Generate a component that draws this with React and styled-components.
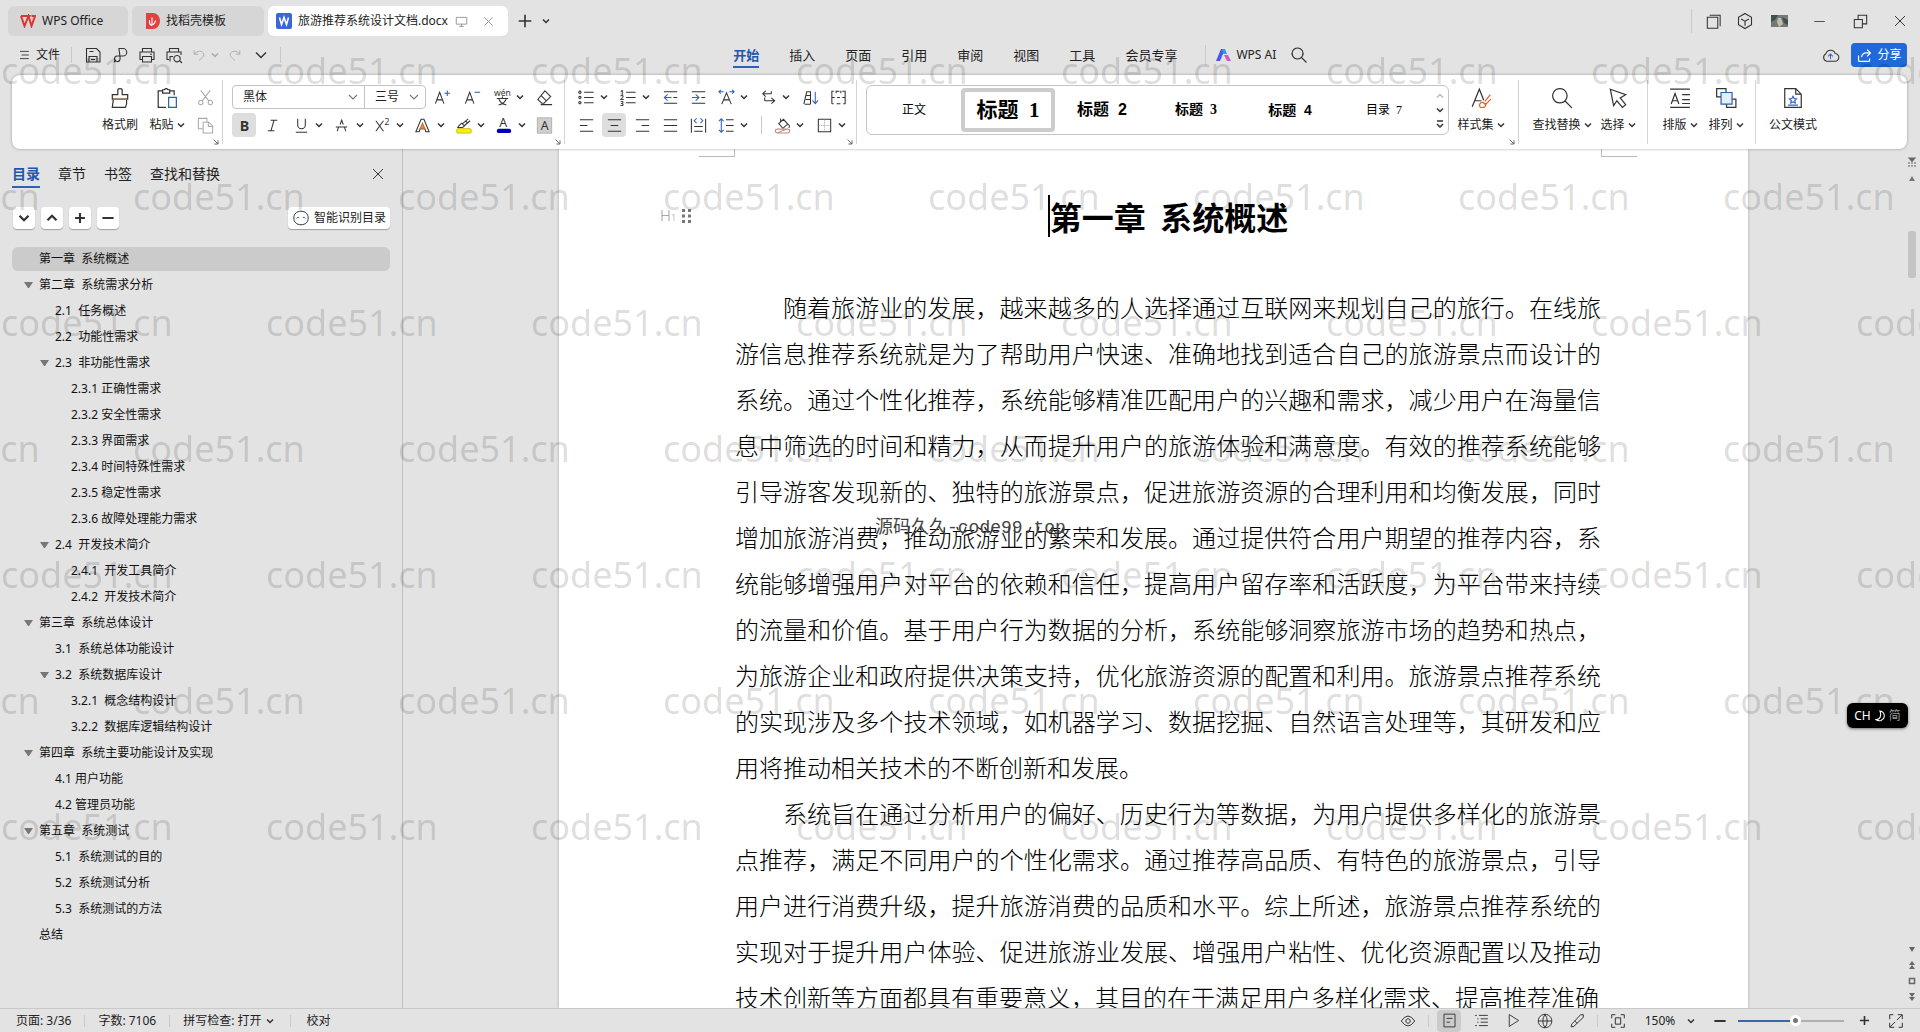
import React, { useState } from 'react';
import styled, { createGlobalStyle, css } from 'styled-components';

const GlobalStyle = createGlobalStyle`
  * {
    box-sizing: border-box;
  }

  body {
    margin: 0;
    overflow: hidden;
    background: #e3e3e3;
    color: #222222;
    font-family: "Noto Sans", "Noto Sans CJK SC", sans-serif;
    font-size: 12px;
    line-height: 16px;
  }

  button,
  select {
    font: inherit;
    color: inherit;
    border: none;
    background: none;
    padding: 0;
    margin: 0;
    cursor: pointer;
  }
`;

const Shell = styled.div`
  position: relative;
  display: flex;
  flex-direction: column;
  height: 100vh;
  overflow: hidden;
`;

const Svg = styled.svg`
  display: block;
  flex: none;
  fill: none;
  stroke: ${props => props.$color || '#333333'};
  stroke-width: ${props => props.$stroke || 1.1};
  font-family: "Noto Sans", "Noto Sans CJK SC", sans-serif;

  text {
    stroke: none;
    fill: #333333;
  }
`;

const BLUE = '#2f5fa8';

const glyphs = {
  menu: <path d="M5 5.5h11M7 10h9M5 14.5h11" />,
  save: <path d="M3.5 3.5h10l3.5 3.5v10h-13.5zM6 17v-5.5h8v5.5M8 14.5h4M6.5 6.5h4" />,
  pdf: <path d="M9 3.5h4a3.700 3.700 0 0 1 0 7.500h-5.500a2.800 2.800 0 1 0 2.500 3.500c.5-3-1-8-1-11zM4 17l2-2" />,
  print: <path d="M5.500 7v-3.500h9v3.500M5 14.500h-2v-7.500h14v7.500h-2M5.500 11.500h9v5.500h-9zM13 9.200h2" />,
  preview: <path d="M5.500 7v-3.500h9v3.500M5 14.500h-2v-7.500h14v3M6 16.500v-5h3M16 16l2 2M13 10.500a3.200 3.200 0 1 0 .1 0z" />,
  undo: <path d="M4 4v5h5M4 9c3-5 11-5 12 0 .5 3-3 5-6 8" />,
  redo: <path d="M16 4v5h-5M16 9c-3-5-11-5-12 0-.5 3 3 5 6 8" />,
  down: <path d="M5 7.500l5 5 5-5" />,
  close: <path d="M4.500 4.500l11 11M15.500 4.500l-11 11" />,
  plus: <path d="M10 3v14M3 10h14" />,
  minus: <path d="M3 10h14" />,
  monitor: <path d="M3 4.500h14v9h-14zM7 16.500h6M10 13.500v3" />,
  search: <path d="M8.500 3a5.500 5.500 0 1 0 .1 0zM12.500 12.500l5 5" />,
  windows: <path d="M3.500 5.500h11v11.500h-11zM6 3.500h11v11.500" />,
  cube: <path d="M10 2.500l6.500 3.700v7.600l-6.500 3.700-6.500-3.700v-7.600zM6 8l4 2.200 4-2.200M10 10.200v4.500" />,
  restore: <path d="M3.500 8h8.500v8.500h-8.500zM7.500 8v-4.500h9v9h-4.500" />,
  cloud: (
    <g>
      <path d="M6 16a4 4 0 0 1-1-7.500 5.200 5.200 0 0 1 10-.500 4 4 0 0 1-.500 8z" />
      <path d="M10 14v-5.500M7.500 11l2.500-2.500 2.500 2.500" stroke="#3b66d6" />
    </g>
  ),
  share: <path d="M13 3l4 4-4 4M17 7h-5c-3.500 0-5 2-5.500 5M3 10v5.500q0 1.500 1.500 1.500h10q1.500 0 1.500-1.500v-2" />,
  brush: (
    <g>
      <path d="M8 7v-4q0-1.500 2-1.500t2 1.500v4h5v4h-14v-4zM4 11l-1 7.500h12q1.500-3 1-7.500" />
      <path d="M3.500 11.200h13" stroke="#d9622b" />
    </g>
  ),
  paste: (
    <g>
      <path d="M6 3.500h-4v15h7M13 3.500h3.500v4M6 2.500h1.500q1.800-2 3.500 0h1.500v3h-6.500z" />
      <path d="M11.500 9.500h7v9h-7z" stroke={BLUE} />
    </g>
  ),
  cut: <path d="M5 2.500l8.500 11M15 2.500l-8.500 11M5 13a2.300 2.300 0 1 0 .1 0zM15 13a2.300 2.300 0 1 0 .1 0z" />,
  copy: <path d="M7 13.500h-4.500v-11h9v4M7.500 6.500h6l4 4v7.500h-10zM13 6.500v4.500h4.500" />,
  grow: (
    <g>
      <path d="M2.500 16.500l4.500-12 4.500 12M4 12.500h6" />
      <path d="M15 2.500v6M12 5.500h6" stroke={BLUE} />
    </g>
  ),
  shrink: (
    <g>
      <path d="M2.500 16.500l4.500-12 4.500 12M4 12.500h6" />
      <path d="M12 4.500h6" stroke={BLUE} />
    </g>
  ),
  pinyin: (
    <g>
      <text x="1" y="8" fontSize="9">wén</text>
      <path d="M4 11h12M10 9v2M6 18c4-1 7-3 8-7M6 11c1 4 4 6 8 7" />
    </g>
  ),
  eraser: <path d="M10.500 3l6 6-7 7h-2.500l-4-4zM6 7.500l6 6M6 17.500h12" />,
  bold: <text x="5" y="15.500" fontSize="15" fontWeight="700">B</text>,
  italic: <path d="M8 4.500h7M5 15.500h7M11.500 4.500l-3 11" />,
  underline: <path d="M6 3v6.500a4 4 0 0 0 8 0v-6.500M4 17h12" />,
  strike: <path d="M4 11.500h12M8.500 9l1.700-4.500 1.700 4.500M5.500 16l1.500-4.500M14.500 16l-1.500-4.500" />,
  superscript: (
    <g>
      <path d="M3 5l8 11M11 5l-8 11" />
      <text x="12" y="9" fontSize="9">2</text>
    </g>
  ),
  effect: (
    <g>
      <path d="M8.500 3.500h3l5.500 13h-3.500l-1-3h-5l-1 3h-3.500z" />
      <path d="M10 7.500l-2.500 6h5z" fill="#e8843f" stroke="#c96a2e" />
    </g>
  ),
  highlight: (
    <g>
      <path d="M5 10.500l3-3 3 3-2 1.500h-5zM9 8l6-5M11 10l6-5M12 5.500l3 2" />
      <rect x="3" y="13.500" width="15" height="4.500" rx="1.500" fill="#fff200" stroke="#c9c000" />
    </g>
  ),
  fontColor: (
    <g>
      <text x="5.500" y="11.500" fontSize="13">A</text>
      <rect x="3" y="13.500" width="15" height="4.500" rx="2" fill="#0000b4" stroke="none" />
    </g>
  ),
  shade: (
    <g>
      <rect x="2.500" y="2" width="15" height="16" fill="#cfcfcf" stroke="#b5b5b5" />
      <text x="6" y="15" fontSize="13">A</text>
    </g>
  ),
  bullets: <path d="M7.500 4.500h10M7.500 10h10M7.500 15.500h10M3 3.300a1.200 1.200 0 1 0 .1 0zM3 8.800a1.200 1.200 0 1 0 .1 0zM3 14.300a1.200 1.200 0 1 0 .1 0z" />,
  numbers: (
    <g>
      <path d="M7.500 4.500h10M7.500 10h10M7.500 15.500h10" />
      <text x="1" y="7" fontSize="7" fontWeight="700">1</text>
      <text x="1" y="13" fontSize="7" fontWeight="700">2</text>
      <text x="1" y="19" fontSize="7" fontWeight="700">3</text>
    </g>
  ),
  outdent: (
    <g>
      <path d="M3 4h14M3 16h14M13 10h4" />
      <path d="M11 10h-7.500M7 6.800l-3.500 3.200 3.500 3.200" stroke="#2f62c4" />
    </g>
  ),
  indent: (
    <g>
      <path d="M3 4h14M3 16h14M13 10h4" />
      <path d="M3 10h7.500M7 6.800l3.500 3.200-3.500 3.200" stroke="#2f62c4" />
    </g>
  ),
  charScale: (
    <g>
      <path d="M5 17l5-12 5 12M7 12.500h6" />
      <path d="M2 4h5M4 2l-2 2 2 2M18 4h-5M16 2l2 2-2 2" stroke="#2f62c4" />
    </g>
  ),
  direction: <path d="M4 6h9M7 3l-3 3 3 3M13 3.500v2.500M6 13.500h10M13 10.500l3.500 3-3.500 3M6 13.500v-3.500" />,
  sort: (
    <g>
      <path d="M3 17l3-13h4v13M5 12h5M4 17h6M5.500 8h4.500" />
      <path d="M15 4v12M12 13l3 3.500 3-3.500" stroke="#2f62c4" />
    </g>
  ),
  tabs: <path d="M3 16.500v-13h2M8 3.500h3M14 3.500h3v13h-2M12 16.500h-4M5 16.500h-2M3 10h3M8.500 10h3M14 10h3M7.500 3v2.500M12.500 3v2.500" />,
  alignLeft: <path d="M3 4h14M3 10h8M3 16h14" />,
  alignCenter: <path d="M3 4h14M6 10h8M3 16h14" />,
  alignRight: <path d="M3 4h14M9 10h8M3 16h14" />,
  justify: <path d="M3 4h14M3 10h14M3 16h14" />,
  distribute: (
    <g>
      <path d="M2.500 3v14.500M17.500 3v14.500M5.500 11h9M5.500 16h9" />
      <path d="M8 2.500l-2.500 2.500 2.500 2.500M12 2.500l2.500 2.500-2.500 2.500" stroke="#2f62c4" />
    </g>
  ),
  lineSpacing: (
    <g>
      <path d="M9.500 4h8M9.500 10h8M9.500 16h8" />
      <path d="M4.500 3v14M2 5.500l2.500-2.500 2.500 2.500M2 14.500l2.500 2.500 2.500-2.500" stroke="#2f62c4" />
    </g>
  ),
  fill: (
    <g>
      <path d="M6 8l5-4.500 4.500 5-5 4.500zM8 6v-3.500M15.500 8.500q3 2 1 4" />
      <path d="M5 13.800h10q2.500 0 2.500 2t-2.500 2h-10q-2.500 0-2.500-2t2.500-2zM5 17.500l9-3.500" stroke="#c08a8a" />
    </g>
  ),
  border: (
    <g>
      <path d="M3.500 3.500h13v13h-13z" />
      <path d="M10 4v12M4 10h12" stroke="#aaaaaa" strokeDasharray="1 1" />
    </g>
  ),
  styles: (
    <g>
      <path d="M2 18l6.500-16 4 10M4.500 12.500h6" />
      <path d="M18.500 7l-5 6M11.500 14a2.600 2.600 0 0 0-2 4.500c3 .5 5-.5 5-3zM12 14l2 2 5-5" stroke="#d9622b" />
    </g>
  ),
  find: <path d="M8 1.500a6.500 6.500 0 1 0 .1 0zM13 13l6 6" />,
  pointer: <path d="M3 2l14 5-5 3 5 6-3 2.500-5-6-3 4.500z" />,
  typeset: (
    <g>
      <path d="M1 2h18M12 7h7M12 11.500h7M12 15h7M1 18.500h18" />
      <path d="M2 15.500l3.500-9.500 3.500 9.500M3.200 12.500h4.600" />
    </g>
  ),
  arrange: (
    <g>
      <path d="M5.500 9h-4v-7.500h8.500v3.500M10.500 15.500v3h8.500v-7.500h-3.500" />
      <path d="M5.500 5h10v10.500h-10z" fill="#e4effc" stroke={BLUE} />
    </g>
  ),
  official: (
    <g>
      <path d="M2.500 1.500h10l5 5v12h-15zM12.500 1.500v5h5" />
      <path d="M10 8.500l1 2 2.200.3-1.600 1.500.4 2.200-2-1-2 1 .4-2.200-1.600-1.500 2.200-.3zM5.500 16.500h9" stroke="#2f62c4" />
    </g>
  ),
  robot: (
    <g>
      <path d="M10 2.500c5 0 8 3 8 7.500s-3 7.500-8 7.500-8-3-8-7.500 3-7.500 8-7.500z" />
      <path d="M5 10.500q1.500-2 3-1M12 9.500q1.500-1 3 1" stroke="#2f62c4" />
    </g>
  ),
  eye: <path d="M2.500 10q7.500-11 15 0-7.500 11-15 0zM10 7.500a2.500 2.500 0 1 0 .1 0z" />,
  page: <path d="M3.500 2.500h13v15h-13zM6.500 7.500h7M6.500 12h4" />,
  outline: <path d="M2.500 4h2M7 4h10.500M5 8h1.500M9 8h8.500M5 12h1.500M9 12h8.500M2.500 16h2M7 16h10.500" />,
  play: <path d="M5 3l11 7-11 7z" />,
  globe: <path d="M10 2.500a7.500 7.500 0 1 0 .1 0zM2.500 10h15M10 2.500q-5 7.500 0 15M10 2.500q5 7.500 0 15" />,
  pen: <path d="M17 3l-3 0-6.500 7 2.500 2.500 7-6.500zM7.500 10l-3.500 3.500-.500 3 3-.500 3.500-3.500" />,
  fit: <path d="M3 7v-4h4M13 3h4v4M17 13v4h-4M7 17h-4v-4M7 6.500h6v7h-6z" />,
  fullscreen: <path d="M3 8v-5h4M12 3h5v5M17 12v5h-4M8 17h-5v-5M11 9l5.500-5.500M9 11l-5.500 5.500" />,
  launcher: <path d="M4 4l11 11M15 6v9h-9" />,
};

const Icon = ({ name, size = 18, color, stroke }) => (
  <Svg width={size} height={size} viewBox="0 0 20 20" $color={color} $stroke={stroke} aria-hidden="true">
    {glyphs[name]}
  </Svg>
);

const Caret = ({ color = '#333333', barred }) => (
  <Svg width="8" height="8" viewBox="0 0 8 8" $color={color} $stroke="1.5" aria-hidden="true">
    <path d={barred ? 'M1 1h6M1 4l3 3 3-3' : 'M1 2.500l3 3 3-3'} />
  </Svg>
);

/* title bar */

const TitleBar = styled.header`
  display: flex;
  align-items: center;
  height: 42px;
  padding-left: 8px;
`;

const FileTab = styled.button`
  display: flex;
  align-items: center;
  gap: 6px;
  height: 30px;
  width: ${props => props.$width}px;
  padding-left: ${props => (props.$active ? 8 : 12)}px;
  margin-right: 4px;
  border-radius: 6px;
  color: #222222;
  white-space: nowrap;
  background: ${props => (props.$active ? '#ffffff' : '#d6d6d6')};

  svg:last-child {
    margin-left: ${props => (props.$active ? 6 : 0)}px;
  }
`;

const TitleTools = styled.div`
  display: flex;
  align-items: center;
  gap: 8px;
  margin-left: 4px;
`;

const PlainButton = styled.button`
  display: flex;
  align-items: center;
  justify-content: center;
  gap: 4px;
  min-width: ${props => props.$width || 18}px;
  height: 22px;
  white-space: nowrap;
  border-radius: 4px;
  background: ${props => (props.$active ? '#cbcbcb' : 'none')};
`;

const WindowTools = styled.div`
  display: flex;
  align-items: center;
  margin-left: auto;
`;

const Divider = styled.span`
  flex: none;
  width: 1px;
  height: ${props => props.$height || 16}px;
  margin: 0 ${props => props.$gap || 0}px;
  background: #c9c9c9;
`;

const Spacer = styled.span`
  flex: none;
  width: ${props => props.$width}px;
`;

/* menu bar */

const MenuBar = styled.nav`
  display: flex;
  align-items: center;
  height: 33px;
  padding-bottom: 7px;
`;

const QuickTools = styled.div`
  display: flex;
  flex: 6 0 0;
  align-items: center;
  gap: 7px;
  padding-left: 16px;
`;

const MenuTabs = styled.div`
  display: flex;
  align-items: center;
  gap: 30px;
`;

const MenuTab = styled.button`
  height: 26px;
  padding-top: 2px;
  font-size: 13px;
  line-height: 20px;
  white-space: nowrap;
  border-bottom: 2px solid transparent;

  ${props => props.$active && css`
    color: #1f56b0;
    font-weight: 700;
    border-bottom-color: #2f62b5;
  `}
`;

const ShareArea = styled.div`
  display: flex;
  flex: 5 0 0;
  align-items: center;
  justify-content: flex-end;
  gap: 11px;
  padding-right: 13px;
`;

const ShareButton = styled.button`
  display: flex;
  align-items: center;
  justify-content: center;
  gap: 4px;
  width: 56px;
  height: 24px;
  color: #ffffff;
  background: #2168d9;
  border-radius: 4px;
`;

/* ribbon */

const Ribbon = styled.section`
  position: relative;
  z-index: 1;
  display: flex;
  height: 74px;
  margin: 0 13px 0 12px;
  background: #ffffff;
  border-radius: 8px;
  box-shadow: 0 0 3px rgba(0, 0, 0, 0.35);
`;

const Group = styled.div`
  position: relative;
  display: flex;
  align-items: flex-start;
  padding: 10px ${props => props.$right || 7}px 0 ${props => props.$left || 7}px;

  &::after {
    content: "";
    position: absolute;
    top: 5px;
    right: 0;
    height: 64px;
    border-right: ${props => (props.$last ? 'none' : '1px solid #d4d4d4')};
  }
`;

const Launcher = styled.button`
  position: absolute;
  right: 3px;
  bottom: 3px;
`;

const BigTool = styled.button`
  display: flex;
  flex-direction: column;
  align-items: center;
  gap: 8px;
  width: ${props => props.$width || 46}px;
  padding-top: 2px;
`;

const BigLabel = styled.span`
  display: flex;
  align-items: center;
  gap: 3px;
  white-space: nowrap;
`;

const ToolColumn = styled.div`
  display: flex;
  flex-direction: column;
  width: ${props => (props.$width ? `${props.$width}px` : 'auto')};
`;

const ToolRow = styled.div`
  display: flex;
  align-items: center;
  justify-content: space-between;
  height: 28px;
  margin-top: ${props => (props.$first ? '-2px' : '0')};
`;

const ToolButton = styled.button`
  display: flex;
  align-items: center;
  width: ${props => props.$width || 28}px;
  height: 24px;

  > span {
    display: flex;
    align-items: center;
    justify-content: center;
    width: 24px;
    height: 24px;
    margin: 0 2px;
    border-radius: 4px;
    background: ${props => (props.$active ? '#dedede' : 'none')};
  }
`;

const RowGap = styled.span`
  width: 14px;
  height: 18px;
  display: flex;
  justify-content: center;
`;

const Combos = styled.div`
  display: flex;
  width: 194px;
  height: 24px;
  margin-left: 2px;
  border: 1px solid #c4c4c4;
  border-radius: 4px;
`;

const Combo = styled.label`
  display: grid;
  align-items: center;
  width: ${props => props.$width}px;
  border-right: ${props => (props.$divided ? '1px solid #c4c4c4' : 'none')};

  select {
    grid-area: 1 / 1;
    width: 100%;
    height: 22px;
    padding-left: 10px;
    appearance: none;
    outline: none;
  }

  svg {
    grid-area: 1 / 1;
    justify-self: end;
    margin-right: 3px;
    pointer-events: none;
  }
`;

const Gallery = styled.div`
  display: flex;
  width: 583px;
  height: 50px;
  border: 1px solid #c4c4c4;
  border-radius: 6px;
`;

const StyleCell = styled.button`
  width: 94px;
  height: 44px;
  margin: 2px 0;
  color: #000000;
  white-space: pre;
  border: 4px solid ${props => (props.$active ? '#cccccc' : 'transparent')};
  border-radius: 4px;
  font-family: ${props => (props.$serif ? '"Liberation Serif"' : '"Liberation Sans"')}, "Noto Sans CJK SC", sans-serif;
  font-size: ${props => props.$size}px;
  font-weight: ${props => (props.$bold ? 700 : 400)};
`;

const GalleryArrows = styled.div`
  display: flex;
  flex: 1;
  flex-direction: column;
  align-items: center;
  justify-content: space-evenly;
`;

/* body */

const Workspace = styled.div`
  display: flex;
  flex: 1;
  min-height: 0;
`;

const Sidebar = styled.aside`
  display: flex;
  flex-direction: column;
  flex: none;
  width: 403px;
  padding: 11px 12px 0;
  border-right: 1px solid #c2c2c2;
`;

const SideTabs = styled.div`
  display: flex;
  align-items: center;
  gap: 18px;
  font-size: 14px;
`;

const SideTab = styled.button`
  height: 28px;
  padding-top: 2px;
  line-height: 22px;
  border-bottom: 2px solid ${props => (props.$active ? '#2f62b5' : 'transparent')};
  color: ${props => (props.$active ? '#1f56b0' : '#222222')};
  font-weight: ${props => (props.$active ? 700 : 400)};
`;

const SideTools = styled.div`
  display: flex;
  gap: 6px;
  margin-top: 19px;
  padding-left: 1px;
`;

const CardButton = styled.button`
  display: flex;
  align-items: center;
  justify-content: center;
  gap: 4px;
  width: ${props => props.$width || 22}px;
  height: 22px;
  background: #ffffff;
  border-radius: 4px;
  box-shadow: 0 1px 1px rgba(0, 0, 0, 0.3);
`;

const PushRight = styled.div`
  margin-left: auto;
`;

const Tree = styled.ul`
  margin: 18px 0 0;
  padding: 0;
  list-style: none;
`;

const TreeItem = styled.li`
  height: 26px;
`;

const TreeRow = styled.button`
  display: flex;
  align-items: center;
  gap: 6px;
  width: 100%;
  height: 24px;
  padding-left: ${props => 12 + props.$level * 16}px;
  color: #111111;
  white-space: pre;
  border-radius: 6px;
  background: ${props => (props.$active ? '#cbcbcb' : 'none')};
`;

const Triangle = styled.span`
  width: 9px;
  border: 4px solid transparent;
  border-top: 6px solid ${props => (props.$shown ? '#777777' : 'transparent')};
  border-bottom: none;
`;

const Canvas = styled.main`
  position: relative;
  display: flex;
  justify-content: center;
  flex: 1;
  min-width: 0;
  overflow: hidden;
`;

const Paper = styled.article`
  width: 1189px;
  background: #ffffff;
  box-shadow: 0 0 3px rgba(0, 0, 0, 0.25);
`;

const CropMarks = styled.div`
  display: flex;
  justify-content: space-between;
  padding: 0 111px 0 140px;

  span {
    width: 36px;
    height: 8px;
    border: 0 solid #b9b9b9;
    border-bottom-width: 1px;
  }

  span:first-child {
    border-right-width: 1px;
  }

  span:last-child {
    border-left-width: 1px;
  }
`;

const HeadingRow = styled.div`
  display: flex;
  align-items: center;
  height: 44px;
  margin: 37px 0 46px;
`;

const HeadingHandle = styled.div`
  display: flex;
  align-items: center;
  gap: 6px;
  width: 176px;
  padding-left: 101px;
  color: #9a9a9a;
  font-size: 15px;
  font-weight: 300;

  small {
    font-size: 9px;
  }
`;

const Heading = styled.h1`
  display: flex;
  align-items: center;
  justify-content: center;
  width: 866px;
  margin: 0;
  color: #000000;
  font-family: "Noto Sans CJK SC", sans-serif;
  font-size: 32px;
  line-height: 40px;
  white-space: pre;
`;

const TextCursor = styled.span`
  width: 2px;
  height: 42px;
  background: #000000;
`;

const Paragraph = styled.p`
  width: 866px;
  margin: 0 0 0 176px;
  color: #000000;
  font-family: "Noto Sans CJK SC", sans-serif;
  font-size: 24px;
  font-weight: 300;
  line-height: 46px;
  text-align: justify;
  text-indent: 2em;
`;

const SourceStamp = styled.div`
  position: absolute;
  left: 472px;
  top: 367px;
  color: #444444;
  font-family: "Liberation Mono", "Noto Sans CJK SC", monospace;
  font-size: 18px;
  line-height: 24px;
`;

const ScrollRail = styled.div`
  display: flex;
  flex-direction: column;
  align-items: center;
  justify-content: space-between;
  flex: none;
  width: 16px;
  padding: 8px 0 7px;
`;

const RailEnd = styled.div`
  display: flex;
  flex-direction: column;
  align-items: center;
  gap: 8px;
`;

const RailThumb = styled.div`
  width: 8px;
  height: 47px;
  margin-top: 42px;
  border-radius: 2px;
  background: #c4c4c4;
`;

/* status bar */

const StatusBar = styled.footer`
  display: flex;
  align-items: center;
  justify-content: space-between;
  height: 24px;
  padding: 0 12px 0 16px;
  border-top: 1px solid #c9c9c9;
`;

const StatusItems = styled.div`
  display: flex;
  align-items: center;
  gap: ${props => props.$gap}px;
`;

const ZoomSlider = styled.input`
  width: 106px;
  height: 14px;
  margin: 0;
  appearance: none;
  background: linear-gradient(to right, #3868a8 55%, #b0b0b0 55%) center / 100% 2px no-repeat;

  &::-webkit-slider-thumb {
    appearance: none;
    width: 11px;
    height: 11px;
    border: 3px solid #ffffff;
    border-radius: 50%;
    background: #777777;
  }
`;

/* overlays */

const InputBadge = styled.div`
  position: absolute;
  right: 12px;
  top: 703px;
  z-index: 4;
  display: flex;
  align-items: center;
  justify-content: center;
  gap: 3px;
  width: 61px;
  height: 25px;
  color: #ffffff;
  background: #000000;
  border-radius: 6px;
  box-shadow: 0 1px 3px rgba(0, 0, 0, 0.5);

  span:last-child {
    color: #999999;
  }
`;

const MarkLayer = styled.div`
  position: absolute;
  inset: 0;
  z-index: 3;
  padding-top: 46px;
  overflow: hidden;
  pointer-events: none;
  color: rgba(0, 0, 0, 0.14);
  font-family: "Noto Sans", sans-serif;
  font-size: 36px;
  line-height: 50px;
`;

const MarkRow = styled.div`
  display: flex;
  height: 126px;
  margin-left: ${props => (props.$odd ? -132 : 1)}px;

  span {
    flex: none;
    width: 265px;
  }
`;

const outline = [
  [1, '第一章  系统概述', false],
  [1, '第二章  系统需求分析', true],
  [2, '2.1  任务概述', false],
  [2, '2.2  功能性需求', false],
  [2, '2.3  非功能性需求', true],
  [3, '2.3.1 正确性需求', false],
  [3, '2.3.2 安全性需求', false],
  [3, '2.3.3 界面需求', false],
  [3, '2.3.4 时间特殊性需求', false],
  [3, '2.3.5 稳定性需求', false],
  [3, '2.3.6 故障处理能力需求', false],
  [2, '2.4  开发技术简介', true],
  [3, '2.4.1  开发工具简介', false],
  [3, '2.4.2  开发技术简介', false],
  [1, '第三章  系统总体设计', true],
  [2, '3.1  系统总体功能设计', false],
  [2, '3.2  系统数据库设计', true],
  [3, '3.2.1  概念结构设计', false],
  [3, '3.2.2  数据库逻辑结构设计', false],
  [1, '第四章  系统主要功能设计及实现', true],
  [2, '4.1 用户功能', false],
  [2, '4.2 管理员功能', false],
  [1, '第五章  系统测试', true],
  [2, '5.1  系统测试的目的', false],
  [2, '5.2  系统测试分析', false],
  [2, '5.3  系统测试的方法', false],
  [1, '总结', false],
];

const menuTabs = ['开始', '插入', '页面', '引用', '审阅', '视图', '工具', '会员专享'];

const paragraphs = [
  '随着旅游业的发展，越来越多的人选择通过互联网来规划自己的旅行。在线旅游信息推荐系统就是为了帮助用户快速、准确地找到适合自己的旅游景点而设计的系统。通过个性化推荐，系统能够精准匹配用户的兴趣和需求，减少用户在海量信息中筛选的时间和精力，从而提升用户的旅游体验和满意度。有效的推荐系统能够引导游客发现新的、独特的旅游景点，促进旅游资源的合理利用和均衡发展，同时增加旅游消费，推动旅游业的繁荣和发展。通过提供符合用户期望的推荐内容，系统能够增强用户对平台的依赖和信任，提高用户留存率和活跃度，为平台带来持续的流量和价值。基于用户行为数据的分析，系统能够洞察旅游市场的趋势和热点，为旅游企业和政府提供决策支持，优化旅游资源的配置和利用。旅游景点推荐系统的实现涉及多个技术领域，如机器学习、数据挖掘、自然语言处理等，其研发和应用将推动相关技术的不断创新和发展。',
  '系统旨在通过分析用户的偏好、历史行为等数据，为用户提供多样化的旅游景点推荐，满足不同用户的个性化需求。通过推荐高品质、有特色的旅游景点，引导用户进行消费升级，提升旅游消费的品质和水平。综上所述，旅游景点推荐系统的实现对于提升用户体验、促进旅游业发展、增强用户粘性、优化资源配置以及推动技术创新等方面都具有重要意义，其目的在于满足用户多样化需求、提高推荐准确',
];

const styleCells = [
  { label: '正文', size: 12, serif: true },
  { label: '标题  1', size: 21, bold: true, serif: true },
  { label: '标题  2', size: 16, bold: true },
  { label: '标题  3', size: 14, bold: true, serif: true },
  { label: '标题  4', size: 14, bold: true },
  { label: '目录  7', size: 12, serif: true },
];

const Tool = ({ icon, label, active, drop, width, color }) => (
  <ToolButton aria-label={label} $active={active} $width={width || (drop ? 40 : 28)}>
    <span><Icon name={icon} size={19} color={color} /></span>
    {drop && <Caret />}
  </ToolButton>
);

const LabelTool = ({ icon, label, width, drop }) => (
  <BigTool $width={width}>
    <Icon name={icon} size={22} />
    <BigLabel>{label}{drop && <Caret />}</BigLabel>
  </BigTool>
);

const Corner = () => (
  <Launcher aria-label="更多设置"><Icon name="launcher" size={8} stroke={2.5} color="#666666" /></Launcher>
);

const App = () => {
  const [activeTab, setActiveTab] = useState('开始');
  const [activeRow, setActiveRow] = useState(0);
  const [zoom, setZoom] = useState(55);

  return (
    <Shell>
      <GlobalStyle />
      <TitleBar>
        <FileTab $width={120}>
          <Svg width="16" height="14" viewBox="0 0 16 14" $color="#dc3532" $stroke="2">
            <path d="M1 2h8.500l-1.500 3M1 2l3.500 10 4-10 3 10 3.500-10h-3.500" />
          </Svg>
          WPS Office
        </FileTab>
        <FileTab $width={132}>
          <Svg width="16" height="16" viewBox="0 0 16 16" $color="#ffffff">
            <path d="M2 0h7a7 8 0 0 1 0 16h-7z" fill="#e2413f" stroke="none" />
            <path d="M5.500 7v2q0 3 2.500 3.500M8 12.500v-8M8 12q3-1 3.500-4.500" />
          </Svg>
          找稻壳模板
        </FileTab>
        <FileTab $width={240} $active>
          <Svg width="16" height="16" viewBox="0 0 16 16" $color="#ffffff" $stroke="1.600">
            <rect width="16" height="16" rx="2" fill="#3a66d9" stroke="none" />
            <path d="M3.500 4.500l2 7 2.500-7 2.500 7 2-7" />
          </Svg>
          旅游推荐系统设计文档.docx
          <Icon name="monitor" size={15} color="#888888" />
          <Icon name="close" size={15} color="#888888" />
        </FileTab>
        <TitleTools>
          <PlainButton aria-label="新建"><Icon name="plus" size={18} stroke={1.8} /></PlainButton>
          <Caret />
        </TitleTools>
        <WindowTools>
          <Divider $height={24} $gap={4} />
          <PlainButton $width={34} aria-label="窗口"><Icon name="windows" size={19} /></PlainButton>
          <PlainButton $width={30} aria-label="应用"><Icon name="cube" size={20} /></PlainButton>
          <PlainButton $width={38} aria-label="账户">
            <Svg width="17" height="12" viewBox="0 0 17 12" $color="none">
              <rect width="17" height="12" fill="#707a78" />
              <path d="M0 0h7l-3 5-4 2zM11 2l6 3v5l-4-2z" fill="#3f4f52" />
              <path d="M7 3h3l2 6-4 3-2-5z" fill="#c5bda9" />
            </Svg>
          </PlainButton>
          <PlainButton $width={42} aria-label="最小化"><Icon name="minus" size={15} /></PlainButton>
          <PlainButton $width={40} aria-label="还原"><Icon name="restore" size={19} /></PlainButton>
          <PlainButton $width={40} aria-label="关闭"><Icon name="close" size={18} /></PlainButton>
        </WindowTools>
      </TitleBar>

      <MenuBar>
        <QuickTools>
          <PlainButton $width={44}><Icon name="menu" size={16} />文件</PlainButton>
          <Divider $gap={4} />
          <PlainButton aria-label="保存"><Icon name="save" size={20} /></PlainButton>
          <PlainButton aria-label="输出"><Icon name="pdf" size={20} /></PlainButton>
          <PlainButton aria-label="打印"><Icon name="print" size={20} /></PlainButton>
          <PlainButton aria-label="打印预览"><Icon name="preview" size={20} /></PlainButton>
          <PlainButton aria-label="撤销"><Icon name="undo" size={16} color="#a8a8a8" /><Caret color="#a8a8a8" /></PlainButton>
          <PlainButton aria-label="恢复"><Icon name="redo" size={16} color="#a8a8a8" /></PlainButton>
          <PlainButton aria-label="更多"><Icon name="down" size={20} stroke={1.4} /></PlainButton>
          <Divider $gap={2} />
        </QuickTools>
        <MenuTabs>
          {menuTabs.map(tab => (
            <MenuTab key={tab} $active={tab === activeTab} onClick={() => setActiveTab(tab)}>{tab}</MenuTab>
          ))}
        </MenuTabs>
        <Spacer $width={18} />
        <Divider $height={20} $gap={10} />
        <PlainButton>
          <Svg width="16" height="14" viewBox="0 0 16 14" $color="none">
            <path d="M0 13l5-12h4l-5 12z" fill="#4b55e8" />
            <path d="M6 1h3l2 5h-4z" fill="#2f9be8" />
            <path d="M8 7h4l3 6h-4z" fill="#d45bb4" />
          </Svg>
          WPS AI
        </PlainButton>
        <Spacer $width={13} />
        <PlainButton aria-label="搜索"><Icon name="search" size={20} /></PlainButton>
        <ShareArea>
          <Icon name="cloud" size={19} />
          <ShareButton><Icon name="share" size={17} color="#ffffff" stroke={1.4} />分享</ShareButton>
        </ShareArea>
      </MenuBar>

      <Ribbon>
        <Group $left={85} $right={4}>
          <LabelTool icon="brush" label="格式刷" width={46} />
          <LabelTool icon="paste" label="粘贴" width={48} drop />
          <ToolColumn>
            <ToolRow $first><Tool icon="cut" label="剪切" color="#aaaaaa" /></ToolRow>
            <ToolRow><Tool icon="copy" label="复制" color="#aaaaaa" /></ToolRow>
          </ToolColumn>
          <Corner />
        </Group>
        <Group>
          <ToolColumn $width={328}>
            <ToolRow $first>
              <Combos>
                <Combo $width={132} $divided>
                  <select aria-label="字体"><option>黑体</option></select>
                  <Icon name="down" size={16} stroke={1.4} color="#777777" />
                </Combo>
                <Combo $width={60}>
                  <select aria-label="字号"><option>三号</option></select>
                  <Icon name="down" size={16} stroke={1.4} color="#777777" />
                </Combo>
              </Combos>
              <Tool icon="grow" label="增大字号" />
              <Tool icon="shrink" label="减小字号" />
              <Tool icon="pinyin" label="拼音指南" drop />
              <Tool icon="eraser" label="清除格式" />
            </ToolRow>
            <ToolRow>
              <Tool icon="bold" label="加粗" active />
              <Tool icon="italic" label="倾斜" />
              <Tool icon="underline" label="下划线" drop />
              <Tool icon="strike" label="删除线" drop />
              <Tool icon="superscript" label="上标" drop />
              <Tool icon="effect" label="文字效果" drop />
              <Tool icon="highlight" label="突出显示" drop />
              <Tool icon="fontColor" label="字体颜色" drop />
              <Tool icon="shade" label="字符底纹" />
            </ToolRow>
          </ToolColumn>
          <Corner />
        </Group>
        <Group $right={5}>
          <ToolColumn $width={280}>
            <ToolRow $first>
              <Tool icon="bullets" label="项目符号" drop width={42} />
              <Tool icon="numbers" label="编号" drop width={42} />
              <Tool icon="outdent" label="减少缩进" />
              <Tool icon="indent" label="增加缩进" />
              <Tool icon="charScale" label="中文版式" drop width={42} />
              <Tool icon="direction" label="换行" drop width={42} />
              <Tool icon="sort" label="排序" />
              <Tool icon="tabs" label="制表位" />
            </ToolRow>
            <ToolRow>
              <Tool icon="alignLeft" label="左对齐" />
              <Tool icon="alignCenter" label="居中" active />
              <Tool icon="alignRight" label="右对齐" />
              <Tool icon="justify" label="两端对齐" />
              <Tool icon="distribute" label="分散对齐" />
              <Tool icon="lineSpacing" label="行距" drop width={42} />
              <RowGap><Divider $height={18} /></RowGap>
              <Tool icon="fill" label="底纹颜色" drop width={42} />
              <Tool icon="border" label="边框" drop width={42} />
            </ToolRow>
          </ToolColumn>
          <Corner />
        </Group>
        <Group $left={9} $right={6}>
          <Gallery>
            {styleCells.map((cell, i) => (
              <StyleCell key={cell.label} $size={cell.size} $bold={cell.bold} $serif={cell.serif} $active={i === 1}>
                {cell.label}
              </StyleCell>
            ))}
            <GalleryArrows>
              <Svg width="8" height="8" viewBox="0 0 8 8" $color="#bbbbbb" $stroke="1.500"><path d="M1 5.500l3-3 3 3" /></Svg>
              <Caret />
              <Caret barred />
            </GalleryArrows>
          </Gallery>
          <LabelTool icon="styles" label="样式集" width={64} drop />
          <Corner />
        </Group>
        <Group $left={10}>
          <LabelTool icon="find" label="查找替换" width={66} drop />
          <LabelTool icon="pointer" label="选择" width={46} drop />
        </Group>
        <Group $left={9}>
          <LabelTool icon="typeset" label="排版" width={46} drop />
          <LabelTool icon="arrange" label="排列" width={46} drop />
        </Group>
        <Group $left={9} $last>
          <LabelTool icon="official" label="公文模式" width={56} />
        </Group>
      </Ribbon>

      <Workspace>
        <Sidebar>
          <SideTabs>
            <SideTab $active>目录</SideTab>
            <SideTab>章节</SideTab>
            <SideTab>书签</SideTab>
            <SideTab>查找和替换</SideTab>
            <PushRight>
              <PlainButton $width={24} aria-label="关闭目录"><Icon name="close" size={18} /></PlainButton>
            </PushRight>
          </SideTabs>
          <SideTools>
            <CardButton aria-label="展开"><Icon name="down" size={18} stroke={2.5} /></CardButton>
            <CardButton aria-label="收起">
              <Svg width="18" height="18" viewBox="0 0 20 20" $stroke="2.500"><path d="M5 12.500l5-5 5 5" /></Svg>
            </CardButton>
            <CardButton aria-label="添加"><Icon name="plus" size={14} stroke={3} /></CardButton>
            <CardButton aria-label="删除"><Icon name="minus" size={16} stroke={2.5} /></CardButton>
            <PushRight>
              <CardButton $width={102}><Icon name="robot" size={18} />智能识别目录</CardButton>
            </PushRight>
          </SideTools>
          <Tree>
            {outline.map(([level, title, open], i) => (
              <TreeItem key={title}>
                <TreeRow $level={level - 1} $active={i === activeRow} onClick={() => setActiveRow(i)}>
                  <Triangle $shown={open} />
                  {title}
                </TreeRow>
              </TreeItem>
            ))}
          </Tree>
        </Sidebar>

        <Canvas>
          <Paper>
            <CropMarks><span /><span /></CropMarks>
            <HeadingRow>
              <HeadingHandle>
                <span>H<small>1</small></span>
                <Svg width="10" height="14" viewBox="0 0 10 14" $color="none">
                  <path d="M0 0h3v3h-3zM6 0h3v3h-3zM0 5.500h3v3h-3zM6 5.500h3v3h-3zM0 11h3v3h-3zM6 11h3v3h-3z" fill="#777777" />
                </Svg>
              </HeadingHandle>
              <Heading><TextCursor />第一章  系统概述</Heading>
            </HeadingRow>
            {paragraphs.map(text => <Paragraph key={text.slice(0, 8)}>{text}</Paragraph>)}
          </Paper>
          <SourceStamp>源码久久-code99.top</SourceStamp>
        </Canvas>

        <ScrollRail>
          <RailEnd>
            <Svg width="10" height="10" viewBox="0 0 10 10" $color="#666666">
              <path d="M2 1h6l-3 3.500z" fill="#666666" />
              <path d="M1 6h8M1 9h8" strokeDasharray="2 1" />
            </Svg>
            <Svg width="8" height="6" viewBox="0 0 8 6" $color="none"><path d="M1 6l3-5 3 5z" fill="#777777" /></Svg>
            <RailThumb />
          </RailEnd>
          <RailEnd>
            <Svg width="8" height="6" viewBox="0 0 8 6" $color="none"><path d="M1 0l3 5 3-5z" fill="#666666" /></Svg>
            <Svg width="8" height="8" viewBox="0 0 8 8" $color="none"><path d="M1 4l3-4 3 4zM1 8l3-4 3 4z" fill="#666666" /></Svg>
            <Svg width="8" height="8" viewBox="0 0 8 8" $color="#666666" $stroke="1.500"><rect x="1.500" y="1.500" width="5" height="5" /></Svg>
            <Svg width="8" height="8" viewBox="0 0 8 8" $color="none"><path d="M1 0l3 4 3-4zM1 4l3 4 3-4z" fill="#666666" /></Svg>
          </RailEnd>
        </ScrollRail>
      </Workspace>

      <StatusBar>
        <StatusItems $gap={13}>
          <PlainButton>页面: 3/36</PlainButton>
          <Divider $height={12} />
          <PlainButton>字数: 7106</PlainButton>
          <Divider $height={12} />
          <PlainButton>拼写检查: 打开 <Caret /></PlainButton>
          <Divider $height={12} $gap={3} />
          <PlainButton>校对</PlainButton>
        </StatusItems>
        <StatusItems $gap={8}>
          <PlainButton $width={24} aria-label="护眼模式"><Icon name="eye" size={18} /></PlainButton>
          <Divider $height={12} />
          <PlainButton $width={24} $active aria-label="页面视图"><Icon name="page" size={17} /></PlainButton>
          <PlainButton $width={24} aria-label="大纲"><Icon name="outline" size={17} /></PlainButton>
          <PlainButton $width={24} aria-label="阅读版式"><Icon name="play" size={17} /></PlainButton>
          <PlainButton $width={24} aria-label="网页版式"><Icon name="globe" size={18} /></PlainButton>
          <PlainButton $width={24} aria-label="写作模式"><Icon name="pen" size={18} /></PlainButton>
          <Divider $height={12} />
          <PlainButton $width={24} aria-label="最佳显示"><Icon name="fit" size={18} /></PlainButton>
          <PlainButton $width={64}>150%<Spacer $width={4} /><Caret /></PlainButton>
          <PlainButton $width={20} aria-label="缩小"><Icon name="minus" size={16} stroke={2.5} /></PlainButton>
          <ZoomSlider
            type="range"
            aria-label="缩放"
            value={zoom}
            onChange={(e) => setZoom(Number(e.target.value))}
          />
          <PlainButton $width={24} aria-label="放大"><Icon name="plus" size={13} stroke={2.5} /></PlainButton>
          <PlainButton $width={24} aria-label="全屏"><Icon name="fullscreen" size={18} /></PlainButton>
        </StatusItems>
      </StatusBar>

      <InputBadge>
        <span>CH</span>
        <Svg width="12" height="12" viewBox="0 0 12 12" $color="#ffffff">
          <path d="M6 1c5 1 6 7 1 9.500-2 .5-4 0-5-1 4 0 6-4 4-8.500z" />
        </Svg>
        <span>简</span>
      </InputBadge>
      <MarkLayer aria-hidden="true">
        {Array.from({ length: 7 }, (_, row) => (
          <MarkRow key={row} $odd={row % 2 === 1}>
            {Array.from({ length: 9 }, (_, col) => <span key={col}>code51.cn</span>)}
          </MarkRow>
        ))}
      </MarkLayer>
    </Shell>
  );
};

export default App;
